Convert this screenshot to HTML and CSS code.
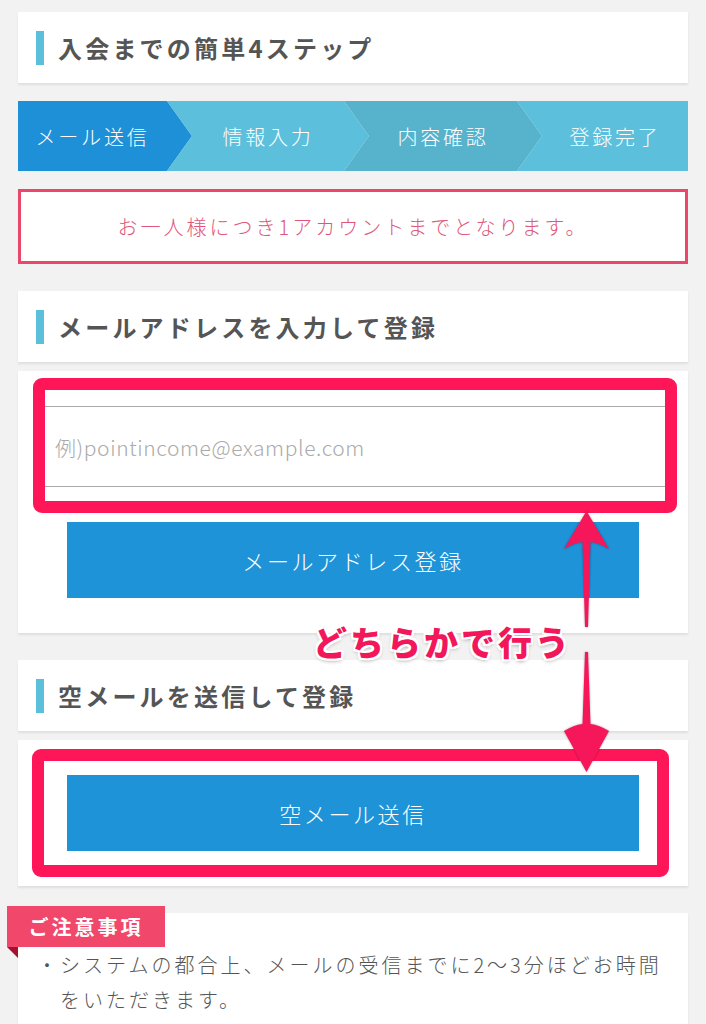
FILE: index.html
```html
<!DOCTYPE html>
<html lang="ja">
<head>
    <meta charset="UTF-8">
    <meta name="viewport" content="width=device-width, initial-scale=1.0">
    <title>会員登録</title>
    <link rel="stylesheet" href="styles.css">
</head>
<body>
    <div class="card title-card">
        <h2 class="title">入会までの簡単4ステップ</h2>
    </div>

    <ol class="steps">
        <li class="step current">メール送信</li>
        <li class="step">情報入力</li>
        <li class="step dark">内容確認</li>
        <li class="step">登録完了</li>
    </ol>

    <p class="notice">お一人様につき1アカウントまでとなります。</p>

    <div class="card title-card gap-top">
        <h2 class="title">メールアドレスを入力して登録</h2>
    </div>
    <div class="card form-card">
        <input type="email" class="mail-input" placeholder="例)pointincome@example.com">
        <button class="btn">メールアドレス登録</button>
        <div class="highlight highlight-input"></div>
    </div>

    <div class="card title-card gap-top">
        <h2 class="title">空メールを送信して登録</h2>
    </div>
    <div class="card form-card">
        <button class="btn">空メール送信</button>
        <div class="highlight highlight-empty"></div>
    </div>

    <div class="card note-card">
        <div class="note-tab">ご注意事項</div>
        <ul class="note-list">
            <li>・システムの都合上、メールの受信までに2〜3分ほどお時間をいただきます。</li>
        </ul>
    </div>

    <!-- 注釈 -->
    <svg class="arrows" width="70" height="270" viewBox="0 0 70 270">
        <path d="M34.5 6 L57 44 Q47 38 38.5 37 L36 122 L33 122 L30.5 37 Q22 38 12 44 Z" />
        <path d="M33 147 L36 147 L38.5 219 Q47 220 57 226 L34.5 267 L12 226 Q22 220 30.5 219 Z" />
    </svg>
    <div class="annotation">どちらかで行う</div>
</body>
</html>
```

FILE: styles.css
```css
body {
    margin: 0;
    padding: 12px 18px 0;
    background: #f2f2f2;
    font-family: "Noto Sans CJK JP", sans-serif;
    color: #555;
    position: relative;
}
.card {
    background: #fff;
    box-shadow: 0 2px 2px rgba(0, 0, 0, 0.08);
}
.title-card {
    height: 71px;
    display: flex;
    align-items: center;
    padding-left: 18px;
}
.gap-top {
    margin-top: 27px;
}
.title {
    margin: 0;
    font-size: 24px;
    font-weight: bold;
    letter-spacing: 3.2px;
    color: #555;
    display: flex;
    align-items: center;
    gap: 14px;
}
.title::before {
    content: "";
    width: 8px;
    height: 34px;
    background: #5bc0dc;
}

/* ステップ */
.steps {
    display: flex;
    list-style: none;
    margin: 18px 0 0;
    padding: 0;
    height: 70px;
}
.step {
    box-sizing: border-box;
    flex-shrink: 0;
    display: flex;
    align-items: center;
    justify-content: center;
    color: #fff;
    font-size: 20px;
    font-weight: 300;
    letter-spacing: 2.8px;
    background: #5cbfdb;
    padding: 0 25px;
    margin-left: -25px;
    clip-path: polygon(0 0, calc(100% - 25px) 0, 100% 50%, calc(100% - 25px) 100%, 0 100%, 25px 50%);
}
.step:nth-child(1) {
    width: 174px;
    margin-left: 0;
    padding-left: 0;
    clip-path: polygon(0 0, calc(100% - 25px) 0, 100% 50%, calc(100% - 25px) 100%, 0 100%);
}
.step:nth-child(2) {
    width: 202px;
}
.step:nth-child(3) {
    width: 198px;
}
.step:nth-child(4) {
    flex: 1;
    padding-right: 0;
    clip-path: polygon(0 0, 100% 0, 100% 100%, 0 100%, 25px 50%);
}
.step.current {
    background: #1e90d8;
}
.step.dark {
    background: #57b2cc;
}

.notice {
    margin: 18px 0 0;
    height: 75px;
    box-sizing: border-box;
    border: 3px solid #e9476b;
    background: #fff;
    color: #e0577b;
    font-size: 20px;
    font-weight: 300;
    letter-spacing: 3px;
    display: flex;
    align-items: center;
    justify-content: center;
}

/* フォーム */
.form-card {
    margin-top: 9px;
    padding: 35px 18px;
    position: relative;
}
.mail-input {
    display: block;
    width: 100%;
    height: 81px;
    box-sizing: border-box;
    border: 1px solid #a9a9a9;
    padding: 0 18px;
    margin-bottom: 35px;
    font-family: "Noto Sans CJK JP", sans-serif;
    font-size: 21px;
    letter-spacing: 0.6px;
    outline: none;
}
.mail-input::placeholder {
    color: #aaa;
    font-weight: 300;
}
.btn {
    display: block;
    width: calc(100% - 62px);
    height: 76px;
    margin: 0 31px;
    border: none;
    background: #1e93d8;
    color: #fff;
    font-family: "Noto Sans CJK JP", sans-serif;
    font-size: 22px;
    font-weight: 300;
    letter-spacing: 2.6px;
}
.highlight {
    position: absolute;
    box-sizing: border-box;
    border: 12px solid #ff1659;
    border-radius: 9px;
    pointer-events: none;
}
.highlight-input {
    left: 15px;
    top: 7px;
    width: 644px;
    height: 135px;
}
.highlight-empty {
    left: 14px;
    top: 9px;
    width: 637px;
    height: 128px;
}

/* 注意事項 */
.note-card {
    margin-top: 27px;
    padding: 34px 19px 30px;
    position: relative;
}
.note-tab {
    position: absolute;
    left: -11px;
    top: -7px;
    width: 158px;
    height: 41px;
    background: #f0476b;
    color: #fff;
    font-size: 20px;
    font-weight: bold;
    letter-spacing: 3px;
    display: flex;
    align-items: center;
    justify-content: center;
}
.note-tab::after {
    content: "";
    position: absolute;
    left: 0;
    top: 41px;
    border-top: 11px solid #a5122f;
    border-left: 11px solid transparent;
}
.note-list {
    list-style: none;
    margin: 0;
    padding: 0;
}
.note-list li {
    font-size: 20px;
    font-weight: 300;
    line-height: 35px;
    letter-spacing: 3px;
    padding-left: 23px;
    text-indent: -23px;
}

/* 注釈 */
.arrows {
    position: absolute;
    left: 552px;
    top: 505px;
    fill: #f5175a;
    filter: drop-shadow(0 0 1px rgba(0, 0, 0, 0.35));
}
.annotation {
    position: absolute;
    left: 313px;
    top: 622px;
    font-size: 34px;
    line-height: 40px;
    font-weight: 900;
    letter-spacing: 3px;
    color: #f2175a;
    white-space: nowrap;
    text-shadow:
        2px 0 #fff, -2px 0 #fff, 0 2px #fff, 0 -2px #fff,
        2px 2px #fff, -2px -2px #fff, 2px -2px #fff, -2px 2px #fff,
        0 2px 4px rgba(0, 0, 0, 0.45);
}
```
